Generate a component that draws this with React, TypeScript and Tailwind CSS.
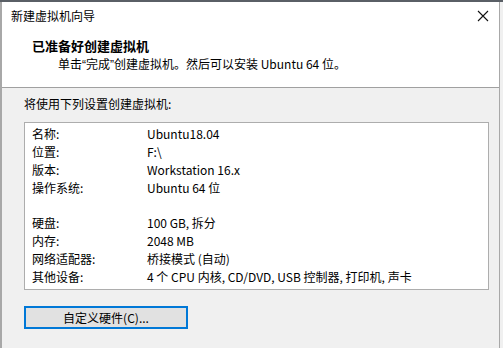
const rows1 = [
  ["名称:", "Ubuntu18.04"],
  ["位置:", "F:\\"],
  ["版本:", "Workstation 16.x"],
  ["操作系统:", "Ubuntu 64 位"],
];

const rows2 = [
  ["硬盘:", "100 GB, 拆分"],
  ["内存:", "2048 MB"],
  ["网络适配器:", "桥接模式 (自动)"],
  ["其他设备:", "4 个 CPU 内核, CD/DVD, USB 控制器, 打印机, 声卡"],
];

function Row({ label, value }: { label: string; value: string }) {
  return (
    <div className="flex h-[18px] items-center">
      <span className="w-[115px] shrink-0">{label}</span>
      <span>{value}</span>
    </div>
  );
}

export default function App() {
  return (
    <div
      className="w-[503px] h-[348px] overflow-hidden flex bg-[#5a5f66] text-[12px] text-black"
      style={{ fontFamily: '"Noto Sans CJK SC", "Liberation Sans", sans-serif' }}
    >
      {/* window */}
      <div className="w-[500px] mt-[2px] flex flex-col border-l-2 border-r border-[#a8a8a8] bg-[#f0f0f0]">
        {/* header */}
        <div className="bg-white h-[86px] border-b border-[#a0a0a0] flex flex-col">
          <div className="h-[28px] flex items-center justify-between pl-[9px] pr-[8px]">
            <span>新建虚拟机向导</span>
            <svg width="12" height="12" viewBox="0 0 12 12" className="mr-[2px]">
              <path d="M1 1L11 11M11 1L1 11" stroke="#111" strokeWidth="1.1" />
            </svg>
          </div>
          <div className="pl-[30px] pt-[7px] font-bold text-[13px] leading-[18px]">已准备好创建虚拟机</div>
          <div className="pl-[56px] leading-[18px]">
            单击<span className="font-['Liberation_Sans']">“</span>完成<span className="font-['Liberation_Sans']">”</span>创建虚拟机。然后可以安装 Ubuntu 64 位。
          </div>
        </div>

        {/* body */}
        <div className="flex flex-col pl-[22px] pr-[10px]">
          <div className="pt-[7px] h-[34px]">将使用下列设置创建虚拟机:</div>
          <div className="h-[168px] w-[465px] bg-white border border-[#adadad] pl-[7px] pt-[2px]">
            {rows1.map(([l, v]) => (
              <Row key={l} label={l} value={v} />
            ))}
            <div className="h-[17px]" />
            {rows2.map(([l, v]) => (
              <Row key={l} label={l} value={v} />
            ))}
          </div>
          <div className="mt-[16px]">
            <button className="w-[164px] h-[23px] bg-[#e1e1e1] border-2 border-[#0078d7] flex items-center justify-center">
              自定义硬件(C)...
            </button>
          </div>
        </div>
      </div>
      {/* desktop behind */}
      <div className="flex-1 mt-[2px] bg-[#f0f0f0]" />
    </div>
  );
}
